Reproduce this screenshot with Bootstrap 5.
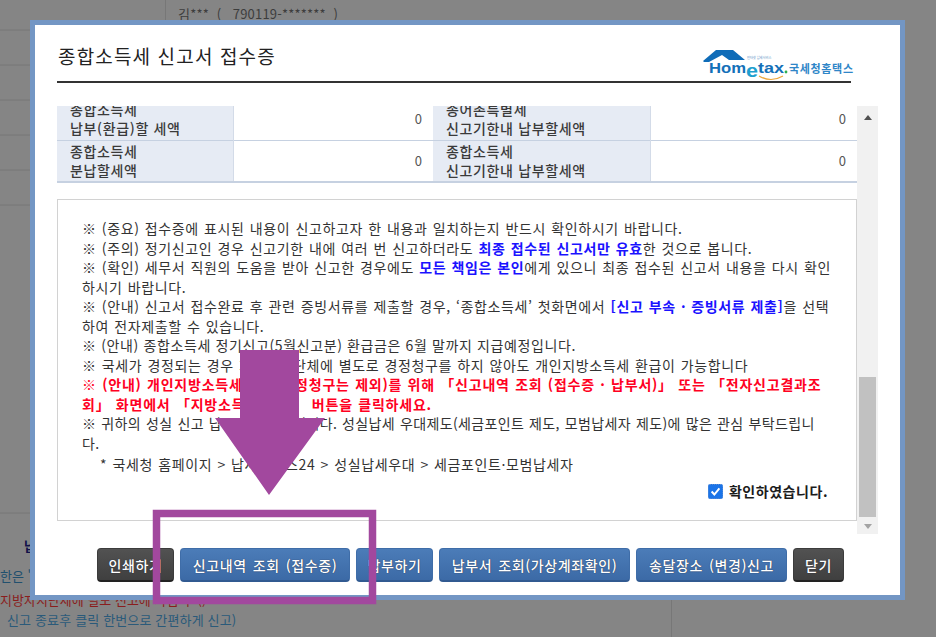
<!DOCTYPE html>
<html lang="ko">
<head>
<meta charset="utf-8">
<title>종합소득세 신고서 접수증</title>
<link href="https://cdn.jsdelivr.net/npm/bootstrap@5.3.0/dist/css/bootstrap.min.css" rel="stylesheet">
<style>
html,body{height:637px;overflow:hidden}
body{background:#858585;font-family:"Noto Sans CJK KR","Liberation Sans",sans-serif;font-size:13px;color:#333}
.desk{position:relative;width:936px;height:637px;overflow:hidden}
.bg-lines{position:absolute;left:0;top:0;width:936px;height:637px}
.bg-id{position:absolute;left:178px;top:4px;color:#3d3d3d;font-size:13px;white-space:pre;letter-spacing:.2px}
.bg-txt{position:absolute;white-space:nowrap;font-size:13px}
.bg-nap{left:24px;top:536px;color:#11114a;font-weight:700}
.bg-han{left:0;top:566px;color:#21506e}
.bg-red{left:0;top:590px;color:#8a1d1d}
.bg-end{left:7px;top:610px;color:#2a5a7a;letter-spacing:.15px}
.win{position:absolute;left:30px;top:20px;width:875px;height:580px;background:#fff;border:5px solid #7396c4;padding:0 22px}
.win-head{height:58px;border-bottom:2px solid #333;margin-right:27px}
.win-title{font-size:19px;font-weight:400;color:#222;letter-spacing:1.15px;margin:0;line-height:1;padding:21px 0 0 1px}
.scroller{position:relative;height:428px;margin-top:23px;overflow:hidden}
.scroll-body{width:800px;position:relative}
.tax-tbl{width:800px;margin-top:-8px;margin-bottom:0;table-layout:fixed;font-size:14px;border-bottom:2px solid #c6d1e1;--bs-table-bg:transparent}
.tax-tbl th,.tax-tbl td{border:0;border-top:1px solid #c6d1e1;padding:0;height:42px;vertical-align:middle}
.tax-tbl tr:first-child th,.tax-tbl tr:first-child td{border-top:0}
.tax-tbl th{background:#e6ebf4;font-weight:500;padding-left:13px;line-height:19px;border-right:1px solid #d3dbe8;color:#3a3a3a;letter-spacing:.65px;white-space:nowrap}
.tax-tbl td{text-align:right;padding-right:11px;color:#555;font-size:13px}
.col-a{width:176px}.col-b{width:200px}.col-c{width:217px}
.notes{width:800px;height:322px;margin-top:16px;border:1px solid #d2d2d2;padding:19px 8px 0 24px;line-height:19.55px;color:#333;font-size:14px;position:relative;letter-spacing:.62px;word-spacing:.7px;white-space:nowrap}
.notes p{margin:0}
.blu{color:#1a12ff;font-weight:700}
.rd{color:#ff0022;font-weight:700;letter-spacing:.78px}
.snug{letter-spacing:.35px}
.plain{word-spacing:0}
.indent{padding-left:18px;margin-top:1px!important}
.confirm{position:absolute;right:28px;top:282px;font-weight:700;color:#1c1c1c;display:flex;align-items:center;gap:6px;letter-spacing:.55px}
.chk{width:15px;height:15px;background:#1b74e8;border:1px dotted #5d8fd6;border-radius:2px;display:block}
.sbar{position:absolute;left:800px;top:0;width:21px;height:428px;background:#f1f1f1}
.sthumb{position:absolute;left:2px;top:271px;width:17px;height:140px;background:#c1c1c1}
.sup,.sdn{position:absolute;left:7px;width:0;height:0;border-left:4px solid transparent;border-right:4px solid transparent}
.sup{top:9px;border-bottom:5px solid #505050}
.sdn{top:418px;border-top:5px solid #a3a3a3}
.btnrow{display:flex;gap:6px;margin-top:14px;padding-left:40px}
.act{height:34px;padding:0;border-radius:4px;color:#fff;font-size:14px;font-weight:500;line-height:32px;border:1px solid #3f6da8;border-bottom:2px solid #315a91;background:linear-gradient(#4b7cb8,#3c6aa6);letter-spacing:.6px;word-spacing:1.5px;text-shadow:0 0 1px #223;white-space:nowrap}
.act:hover{color:#fff;background:#3c6aa6}
.act-d{background:linear-gradient(#525252,#3f3f3f);border-color:#3c3c3c;border-bottom-color:#222}
.act-d:hover{background:#3f3f3f}
.w77{width:77px}.w170{width:170px}.w191{width:191px}.w151{width:151px}.w51{width:51px}
.mark-arrow{position:absolute;left:0;top:0;width:936px;height:637px;pointer-events:none}
.logo{position:absolute;left:697px;top:44px}
.logo text{font-family:"Liberation Sans",sans-serif}
.logo .kr{font-family:"Noto Sans CJK KR",sans-serif}
</style>
</head>
<body>
<div class="desk">
  <svg class="bg-lines" viewBox="0 0 936 637" aria-hidden="true">
    <path d="M0 30H30M0 65H30M0 100H30M0 135H30M0 170H30M0 205H30M0 513H30M165.500 0V20M671.500 600V637" stroke="#777" fill="none"/>
  </svg>
  <div class="bg-id">김***  (   790119-*******  )</div>
  <div class="bg-txt bg-nap">납</div>
  <div class="bg-txt bg-han">한은 &#39;</div>
  <div class="bg-txt bg-red">지방자치단체에 별도 신고에 가입 수 ()</div>
  <div class="bg-txt bg-end">신고 종료후 클릭 한번으로 간편하게 신고)</div>

  <section class="win">
    <header class="win-head">
      <h1 class="win-title">종합소득세 신고서 접수증</h1>
    </header>
    <div class="scroller">
      <div class="scroll-body">
        <table class="table tax-tbl">
          <colgroup><col class="col-a"><col class="col-b"><col class="col-c"><col></colgroup>
          <tr><th>종합소득세<br>납부(환급)할 세액</th><td>0</td><th>종어촌특별세<br>신고기한내 납부할세액</th><td>0</td></tr>
          <tr><th>종합소득세<br>분납할세액</th><td>0</td><th>종합소득세<br>신고기한내 납부할세액</th><td>0</td></tr>
        </table>
        <div class="notes">
          <p>※ (중요) 접수증에 표시된 내용이 신고하고자 한 내용과 일치하는지 반드시 확인하시기 바랍니다.</p>
          <p>※ (주의) 정기신고인 경우 신고기한 내에 여러 번 신고하더라도 <span class="blu">최종 접수된 신고서만 유효</span>한 것으로 봅니다.</p>
          <p>※ (확인) 세무서 직원의 도움을 받아 신고한 경우에도 <span class="blu">모든 책임은 본인</span>에게 있으니 최종 접수된 신고서 내용을 다시 확인<br>하시기 바랍니다.</p>
          <p>※ (안내) 신고서 접수완료 후 관련 증빙서류를 제출할 경우, ‘종합소득세’ 첫화면에서 <span class="blu">[신고 부속 · 증빙서류 제출]</span>을 선택<br>하여 전자제출할 수 있습니다.</p>
          <p class="plain">※ (안내) 종합소득세 정기신고(5월신고분) 환급금은 6월 말까지 지급예정입니다.</p>
          <p>※ 국세가 경정되는 경우 지방자치단체에 별도로 경정청구를 하지 않아도 개인지방소득세 환급이 가능합니다</p>
          <p class="rd">※ (안내) 개인지방소득세 신고(경정청구는 제외)를 위해 「신고내역 조회 (접수증 · 납부서)」 또는 「전자신고결과조<br>회」 화면에서 「지방소득세 신고」 버튼을 클릭하세요.</p>
          <p class="snug">※ 귀하의 성실 신고 납부에 감사드립니다. 성실납세 우대제도(세금포인트 제도, 모범납세자 제도)에 많은 관심 부탁드립니<br>다.</p>
          <p class="indent">* 국세청 홈페이지 &gt; 납세서비스24 &gt; 성실납세우대 &gt; 세금포인트·모범납세자</p>
          <div class="confirm">
            <svg class="chk" viewBox="0 0 15 15" aria-hidden="true"><path d="M3 7.500 6.200 11 12 4" fill="none" stroke="#fff" stroke-width="2.300"/></svg>
            <span>확인하였습니다.</span>
          </div>
        </div>
      </div>
      <div class="sbar"><span class="sup"></span><span class="sthumb"></span><span class="sdn"></span></div>
    </div>
    <div class="btnrow">
      <button type="button" class="btn act act-d w77">인쇄하기</button>
      <button type="button" class="btn act w170">신고내역 조회 (접수증)</button>
      <button type="button" class="btn act w77">납부하기</button>
      <button type="button" class="btn act w191">납부서 조회(가상계좌확인)</button>
      <button type="button" class="btn act w151">송달장소 (변경)신고</button>
      <button type="button" class="btn act act-d w51">닫기</button>
    </div>
  </section>

  <svg class="logo" width="165" height="42" viewBox="697 44 165 42" role="img" aria-label="Hometax 국세청홈택스">
    <path d="M703 61 716 50H733L745 60H729L722 55 709 62H704Z" fill="#0f6cb8"/>
    <text x="747" y="59" font-size="3.200" fill="#5b8fc4" class="kr">인터넷 납세서비스</text>
    <text x="709" y="73" font-size="15.500" font-weight="700" fill="#1470b8" textLength="37" lengthAdjust="spacingAndGlyphs">Hom</text>
    <text x="746" y="77" font-size="18" font-weight="700" fill="#1da0cf" textLength="12" lengthAdjust="spacingAndGlyphs">e</text>
    <text x="758" y="73" font-size="15.500" font-weight="700" fill="#1470b8" textLength="26" lengthAdjust="spacingAndGlyphs">tax</text>
    <circle cx="786" cy="72" r="1.400" fill="#2fae4e"/>
    <path d="M759 76Q771 83 783 76" fill="none" stroke="#eda63b" stroke-width="1.200"/>
    <text x="789" y="73" font-size="11" font-weight="700" fill="#2f86c8" textLength="64" class="kr">국세청홈택스</text>
  </svg>

  <svg class="mark-arrow" viewBox="0 0 936 637" aria-hidden="true">
    <path d="M240 350H299V418H325L269 495 215 418H240Z" fill="#a2489e"/>
    <rect x="156.500" y="513.500" width="216" height="87" fill="none" stroke="#a2489e" stroke-width="7.500"/>
  </svg>
</div>
<script src="https://cdn.jsdelivr.net/npm/bootstrap@5.3.0/dist/js/bootstrap.bundle.min.js"></script>
</body>
</html>
